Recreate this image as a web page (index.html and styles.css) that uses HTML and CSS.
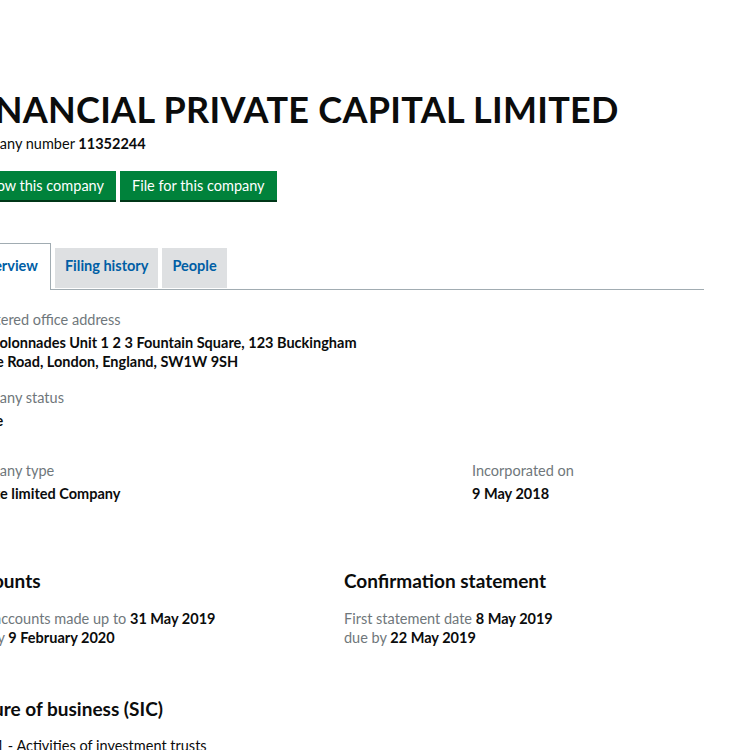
FILE: index.html
```html
<!DOCTYPE html>
<html>
	<head>
		<title>Company overview</title>
		<link rel="stylesheet" href="styles.css">
	</head>
	<body>
		<div id="page">
			<div id="company-header">
				<h1 class="company-name">FINANCIAL PRIVATE CAPITAL LIMITED</h1>
				<p class="company-number">Company number <strong>11352244</strong></p>
				<div class="actions">
					<a class="button" href="#">Follow this company</a>
					<a class="button" href="#">File for this company</a>
				</div>
			</div>

			<ul class="tabs">
				<li class="tab active"><a href="#">Overview</a></li>
				<li class="tab"><a href="#">Filing history</a></li>
				<li class="tab"><a href="#">People</a></li>
			</ul>

			<div id="content">
				<dl class="field">
					<dt>Registered office address</dt>
					<dd class="address">The Colonnades Unit 1 2 3 Fountain Square, 123 Buckingham Palace Road, London, England, SW1W 9SH</dd>
				</dl>

				<dl class="field status">
					<dt>Company status</dt>
					<dd>Active</dd>
				</dl>

				<div class="row">
					<dl class="field col-type">
						<dt>Company type</dt>
						<dd>Private limited Company</dd>
					</dl>
					<dl class="field">
						<dt>Incorporated on</dt>
						<dd>9 May 2018</dd>
					</dl>
				</div>

				<div class="row sections">
					<div class="col-half">
						<h2>Accounts</h2>
						<p>First accounts made up to <strong>31 May 2019</strong><br>
						due by <strong>9 February 2020</strong></p>
					</div>
					<div class="col-half">
						<h2>Confirmation statement</h2>
						<p>First statement date <strong>8 May 2019</strong><br>
						due by <strong>22 May 2019</strong></p>
					</div>
				</div>

				<h2 class="sic-title">Nature of business (SIC)</h2>
				<ul class="sic">
					<li>64301 - Activities of investment trusts</li>
				</ul>
			</div>
		</div>
	</body>
</html>
```

FILE: styles.css
```css
html {
	font-size: 16px;
}

body {
	margin: 0;
	font-family: "Lato", "Noto Sans", sans-serif;
	color: #0b0c0c;
	background-color: #fff;
	overflow: hidden;
}

/* page is scrolled a little to the right */
#page {
	width: 742px;
	margin-left: -38px;
	padding-top: 89px;
}

.company-name {
	margin: 0 0 0 1px;
	font-size: 36px;
	line-height: 40px;
	font-weight: 700;
	letter-spacing: 0.3px;
}

.company-number {
	margin: 5px 0 0;
	font-size: 14.5px;
	line-height: 20px;
}

.company-number strong {
	font-weight: 700;
}

.actions {
	display: flex;
	gap: 4px;
	margin-top: 17px;
}

.button {
	display: block;
	background-color: #00823b;
	color: #fff;
	text-decoration: none;
	font-size: 14.5px;
	line-height: 20px;
	padding: 5px 12px 4px;
	box-shadow: 0 2px 0 #003618;
}

.tabs {
	display: flex;
	align-items: flex-start;
	margin: 43px 0 0;
	padding: 0;
	list-style: none;
	border-bottom: 1px solid #a1acb2;
}

.tab {
	margin-right: 4px;
	margin-top: 5px;
	background-color: #dee0e2;
}

.tab a {
	display: block;
	padding: 9px 10px 13px;
	font-size: 14.5px;
	line-height: 18px;
	font-weight: 700;
	color: #005ea5;
	text-decoration: none;
}

.tab.active {
	margin-top: 0;
	margin-bottom: -1px;
	background-color: #fff;
	border: 1px solid #a1acb2;
	border-bottom: none;
}

.tab.active a {
	padding: 13px 12px 15px;
}

#content {
	padding-top: 20px;
}

.field {
	margin: 0 0 17px;
}

.field.status {
	margin-bottom: 31px;
}

.row .field {
	margin-bottom: 0;
}

.field dt {
	font-size: 14.5px;
	line-height: 20px;
	color: #6f777b;
}

.field dd {
	margin: 3px 0 0;
	font-size: 14.5px;
	line-height: 19px;
	font-weight: 700;
}

.address {
	width: 422px;
}

.row {
	display: flex;
}

.col-type {
	flex: none;
	width: 510px;
}

.sections {
	margin-top: 66px;
}

.col-half {
	flex: none;
	width: 382px;
}

h2 {
	margin: 0;
	font-size: 19px;
	line-height: 24px;
	font-weight: 700;
}

.col-half p {
	margin: 16px 0 0;
	font-size: 14.5px;
	line-height: 19px;
	color: #6f777b;
}

.col-half p strong {
	color: #0b0c0c;
}

.sic-title {
	margin-top: 50px;
}

.sic {
	margin: 15px 0 0;
	padding: 0;
	list-style: none;
	font-size: 14.5px;
	line-height: 19px;
}
```
